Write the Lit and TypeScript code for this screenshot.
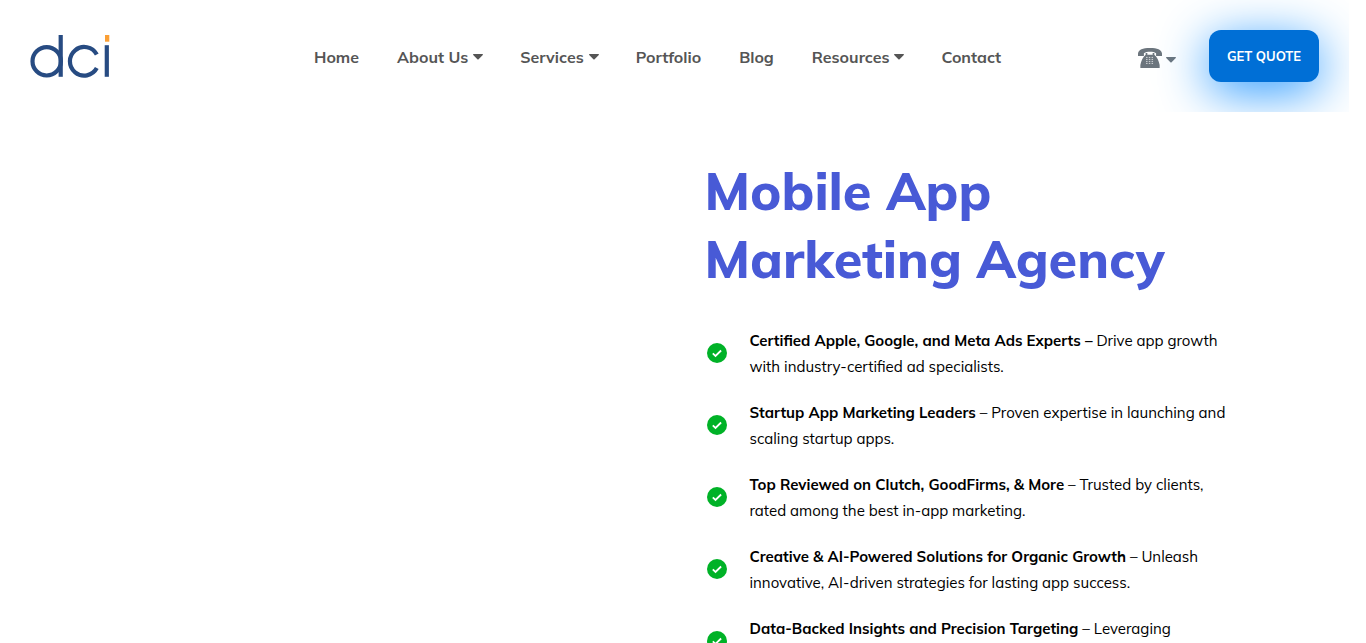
import { LitElement, html, css, svg, nothing } from "lit";
import { customElement } from "lit/decorators.js";

const NAV = [
  { label: "Home" },
  { label: "About Us", menu: true },
  { label: "Services", menu: true },
  { label: "Portfolio" },
  { label: "Blog" },
  { label: "Resources", menu: true },
  { label: "Contact" },
];

const POINTS = [
  ["Certified Apple, Google, and Meta Ads Experts –", "Drive app growth", "with industry-certified ad specialists."],
  ["Startup App Marketing Leaders", "– Proven expertise in launching and", "scaling startup apps."],
  ["Top Reviewed on Clutch, GoodFirms, & More", "– Trusted by clients,", "rated among the best in-app marketing."],
  ["Creative & AI-Powered Solutions for Organic Growth", "– Unleash", "innovative, AI-driven strategies for lasting app success."],
  ["Data-Backed Insights and Precision Targeting", "– Leveraging", ""],
];

const caret = html`<svg class="caret" viewBox="0 0 10 6" aria-hidden="true">
  <path d="M.7 0h8.6c.6 0 .9.7.5 1.1L5.6 5.2c-.3.3-.9.3-1.2 0L.2 1.1C-.2.7.1 0 .7 0z" fill="currentColor" />
</svg>`;

const keys = [0, 1, 2, 3].flatMap((row) =>
  [0, 1, 2].map(
    (col) => svg`<rect x=${8.2 + col * 2.8} y=${8.9 + row * 2} width="1.5" height="1" fill="#fff" fill-opacity=".7" />`
  )
);

@customElement("app-root")
export class AppRoot extends LitElement {
  static styles = css`
    :host {
      display: block;
      box-sizing: border-box;
      height: 100vh;
      overflow: hidden;
      padding-right: 17px;
      background: #fff;
      color: #000;
      font-family: Mulish, Muli, Lato, "Open Sans", sans-serif;
    }
    a { color: inherit; text-decoration: none; }
    .header {
      display: flex;
      align-items: center;
      box-sizing: border-box;
      height: 112px;
      padding: 0 30px;
      overflow: hidden;
    }
    .brand, .nav, .phone { margin-top: 2px; }
    .logo { display: block; width: 80px; height: 44px; }
    .nav {
      display: flex;
      gap: 38px;
      margin-left: 204px;
      color: #555;
      font-size: 16px;
      line-height: 24px;
      font-weight: 700;
      white-space: nowrap;
    }
    .link { display: flex; align-items: center; gap: 4px; }
    .caret { display: block; width: 10px; height: 6px; }
    .nav .caret { margin: 0 -1px 0 1px; }
    .actions { display: flex; align-items: center; gap: 33px; margin-left: auto; }
    .phone {
      display: flex;
      align-items: center;
      gap: 4px;
      padding: 2px 0 0;
      border: 0;
      background: none;
      color: #6c757d;
    }
    .phone .caret { margin-top: 4px; }
    .handset { display: block; width: 24px; height: 20px; }
    .quote {
      width: 110px;
      height: 52px;
      padding: 0;
      border: 0;
      border-radius: 12px;
      background: #006fd6;
      box-shadow: 0 10px 50px #2898ff;
      color: #fff;
      font: 700 13px/20px Mulish, Muli, "Open Sans", sans-serif;
    }
    .hero { display: grid; grid-template-columns: 1fr 1fr; }
    .copy { grid-column: 2; padding: 45px 0 0 30px; }
    .title {
      margin: 0;
      color: #485ad6;
      font-size: 52px;
      line-height: 68px;
      font-weight: 800;
    }
    .points {
      display: grid;
      gap: 20px;
      margin: 35px 0 0;
      padding: 0;
      list-style: none;
    }
    .point { display: flex; align-items: center; gap: 23px; padding-left: 2px; }
    .check { flex: none; width: 20px; height: 20px; margin-bottom: 2px; }
    .text {
      min-height: 52px;
      margin: 0;
      font-size: 15px;
      line-height: 26px;
      white-space: nowrap;
    }
  `;

  render() {
    return html`
      <header class="header">
        <a class="brand" href="#" aria-label="dci">
          <svg class="logo" viewBox="0 0 80 44" aria-hidden="true">
            <g fill="none" stroke="#274b82" stroke-width="4.2">
              <circle cx="16.7" cy="26.3" r="14.2" />
              <path d="M30.7 0V41.8" />
              <path d="M66.8 19.5A14.3 14.3 0 1 0 66.8 33.100" />
              <path d="M76.8 10.200V41.800" />
            </g>
            <path d="M75 0h4.300v6.700h-4.300z" fill="#fb9f34" />
          </svg>
        </a>
        <nav class="nav" aria-label="Main">
          ${NAV.map((n) => html`<a class="link" href="#">${n.label}${n.menu ? caret : nothing}</a>`)}
        </nav>
        <div class="actions">
          <button class="phone" type="button" aria-label="Call us">
            <svg class="handset" viewBox="0 0 24.400 20" preserveAspectRatio="none" aria-hidden="true">
              <path fill="currentColor" d="M0 8V5.500C.8 1.500 4.500 0 12.200 0S23.600 1.500 24.400 5.500V8H18.400V5.200C16.500 4 15 3.700 12.200 3.700S7.900 4 6 5.200V8z" />
              <path fill="currentColor" d="M7.800 5h1.700v1.700h5.400V5h1.700v1.700c2.800 2.300 4.800 6.500 5.400 10.300V20H2.400v-3c.6-3.800 2.600-8 5.400-10.300z" />
              ${keys}
            </svg>
            ${caret}
          </button>
          <button class="quote" type="button">GET QUOTE</button>
        </div>
      </header>
      <main class="hero">
        <section class="copy">
          <h1 class="title">Mobile App<br />Marketing Agency</h1>
          <ul class="points">
            ${POINTS.map(
              ([lead, first, second]) => html`<li class="point">
                <svg class="check" viewBox="0 0 20 20" aria-hidden="true">
                  <circle cx="10" cy="10" r="10" fill="#00b227" />
                  <path d="M5.800 10.300l2.700 2.600 5.600-5.400" fill="none" stroke="#fff" stroke-width="1.800" />
                </svg>
                <p class="text"><b>${lead}</b> ${first}<br />${second}</p>
              </li>`
            )}
          </ul>
        </section>
      </main>
    `;
  }
}
